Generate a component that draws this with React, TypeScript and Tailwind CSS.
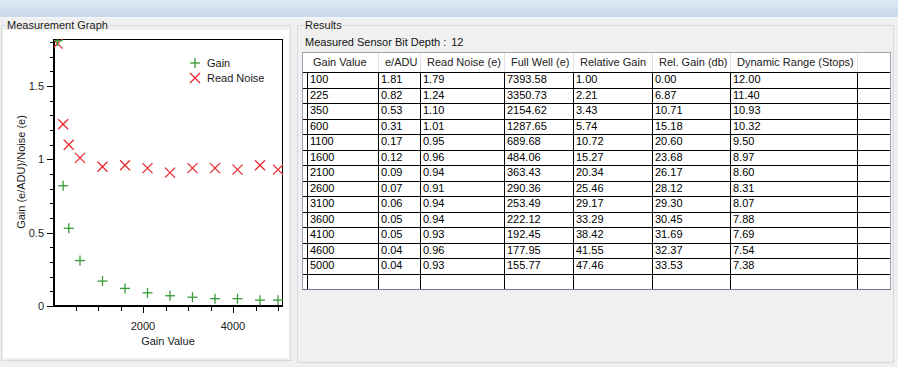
import React from "react";

const gains = [100, 225, 350, 600, 1100, 1600, 2100, 2600, 3100, 3600, 4100, 4600, 5000];
const eadu = [1.81, 0.82, 0.53, 0.31, 0.17, 0.12, 0.09, 0.07, 0.06, 0.05, 0.05, 0.04, 0.04];
const noise = [1.79, 1.24, 1.1, 1.01, 0.95, 0.96, 0.94, 0.91, 0.94, 0.94, 0.93, 0.96, 0.93];

const rows: string[][] = [
  ["100", "1.81", "1.79", "7393.58", "1.00", "0.00", "12.00"],
  ["225", "0.82", "1.24", "3350.73", "2.21", "6.87", "11.40"],
  ["350", "0.53", "1.10", "2154.62", "3.43", "10.71", "10.93"],
  ["600", "0.31", "1.01", "1287.65", "5.74", "15.18", "10.32"],
  ["1100", "0.17", "0.95", "689.68", "10.72", "20.60", "9.50"],
  ["1600", "0.12", "0.96", "484.06", "15.27", "23.68", "8.97"],
  ["2100", "0.09", "0.94", "363.43", "20.34", "26.17", "8.60"],
  ["2600", "0.07", "0.91", "290.36", "25.46", "28.12", "8.31"],
  ["3100", "0.06", "0.94", "253.49", "29.17", "29.30", "8.07"],
  ["3600", "0.05", "0.94", "222.12", "33.29", "30.45", "7.88"],
  ["4100", "0.05", "0.93", "192.45", "38.42", "31.69", "7.69"],
  ["4600", "0.04", "0.96", "177.95", "41.55", "32.37", "7.54"],
  ["5000", "0.04", "0.93", "155.77", "47.46", "33.53", "7.38"],
];

const headers = [
  "Gain Value",
  "e/ADU",
  "Read Noise (e)",
  "Full Well (e)",
  "Relative Gain",
  "Rel. Gain (db)",
  "Dynamic Range (Stops)",
  "",
];

const cols = "grid grid-cols-[4px_71px_42px_84px_69px_79px_78px_127px_33px]";

const px = (v: number) => 53 + v * 0.045;
const py = (v: number) => 306 - v * 146.6;

const GREEN = "#3a9a3a";
const RED = "#e8262e";

function Plus({ x, y }: { x: number; y: number }) {
  return (
    <g stroke={GREEN} strokeWidth={1.3}>
      <line x1={x - 5} y1={y} x2={x + 5} y2={y} />
      <line x1={x} y1={y - 5} x2={x} y2={y + 5} />
    </g>
  );
}

function Cross({ x, y }: { x: number; y: number }) {
  return (
    <g stroke={RED} strokeWidth={1.2}>
      <line x1={x - 5} y1={y - 5} x2={x + 5} y2={y + 5} />
      <line x1={x - 5} y1={y + 5} x2={x + 5} y2={y - 5} />
    </g>
  );
}

function Chart() {
  const yMinor: number[] = [];
  for (let i = 0; i <= 18; i++) yMinor.push(i / 10);
  const xTicks: number[] = [];
  for (let v = 500; v <= 5000; v += 500) xTicks.push(v);
  return (
    <svg width={286} height={328} viewBox="3 30 286 328" className="block bg-white">
      <defs>
        <clipPath id="plot">
          <rect x={54} y={39} width={229} height={267} />
        </clipPath>
      </defs>
      <g fontFamily="'Liberation Sans', Arial, sans-serif" fontSize={11} fill="#1a1a1a">
        <rect x={54.5} y={39.5} width={228} height={267} fill="none" stroke="#000" strokeWidth={1} />
        <rect x={53} y={39} width={2} height={268} fill="#000" />
        <rect x={53} y={305} width={230} height={2} fill="#000" />
        {yMinor.map((v, i) => {
          const major = i % 5 === 0;
          const y = Math.round(py(v)) + 0.5;
          return <line key={i} x1={major ? 47 : 50} x2={53} y1={y} y2={y} stroke="#000" strokeWidth={1} />;
        })}
        <text x={44} y={310} textAnchor="end">0</text>
        <text x={44} y={237} textAnchor="end">0.5</text>
        <text x={44} y={163} textAnchor="end">1</text>
        <text x={44} y={90} textAnchor="end">1.5</text>
        {xTicks.map((v) => {
          const major = v % 2000 === 0;
          const x = Math.round(px(v)) + 0.5;
          return <line key={v} x1={x} x2={x} y1={307} y2={major ? 313 : 311} stroke="#000" strokeWidth={1} />;
        })}
        <text x={143} y={330} textAnchor="middle">2000</text>
        <text x={233} y={330} textAnchor="middle">4000</text>
        <text x={168} y={345} textAnchor="middle">Gain Value</text>
        <text transform="translate(25,172) rotate(-90)" textAnchor="middle">Gain (e/ADU)/Noise (e)</text>
        <g clipPath="url(#plot)">
          {gains.map((g, i) => (
            <Cross key={"n" + i} x={px(g)} y={py(noise[i])} />
          ))}
          {gains.map((g, i) => (
            <Plus key={"g" + i} x={px(g)} y={py(eadu[i])} />
          ))}
        </g>
        <Plus x={195} y={63} />
        <text x={207} y={67}>Gain</text>
        <Cross x={195} y={78} />
        <text x={207} y={82}>Read Noise</text>
      </g>
    </svg>
  );
}

export default function App() {
  return (
    <div className="w-[898px] h-[367px] overflow-hidden bg-[#f0f0f0] flex flex-col font-['Liberation_Sans',Arial,sans-serif] text-[11px] text-[#111]">
      <div className="h-[17px] shrink-0 bg-gradient-to-b from-[#dfe9f5] to-[#c7d8eb]" />
      <div className="h-[1px] shrink-0 bg-[#f7f9fb]" />
      <div className="flex items-start">
        <fieldset className="ml-[1px] w-[290px] h-[343px] border border-[#d3dae2] pl-[1px] pr-[1px]">
          <legend className="ml-[3px] px-[1px] leading-[14px] text-[#1a1a1a]">Measurement Graph</legend>
          <div className="-mt-[2px]">
            <Chart />
          </div>
        </fieldset>
        <fieldset className="ml-[6px] w-[597px] h-[345px] border border-[#d3dae2]">
          <legend className="ml-[6px] px-[1px] leading-[14px] text-[#1a1a1a]">Results</legend>
          <div className="mt-[3px] ml-[4px] h-[14px] leading-[14px] pl-[3px] flex">
            <span>Measured Sensor Bit Depth :</span>
            <span className="ml-[5px]">12</span>
          </div>
          <div className="mt-[3px] ml-[4px] w-[589px] border border-[#9aa4ae] border-b-[#6d7b8c] bg-white text-black">
            <div className={cols + " h-[20px] border-b border-black"}>
              <div />
              {headers.map((h, i) => (
                <div
                  key={i}
                  className={
                    "pl-[6px] leading-[19px] whitespace-nowrap overflow-hidden text-[#222] " +
                    (i === 0 ? "" : "border-l border-[#e2e2e2]")
                  }
                >
                  {h}
                </div>
              ))}
            </div>
            {[...rows, ["", "", "", "", "", "", ""]].map((r, ri) => {
              const last = ri === rows.length;
              const h = last ? "h-[14px]" : ri % 2 === 0 ? "h-[16px] border-b border-black" : "h-[15px] border-b border-black";
              return (
                <div key={ri} className={cols + " " + h}>
                  <div className="bg-white" />
                  {[...r, ""].map((c, ci) => (
                    <div key={ci} className="border-l border-black pl-[2px] leading-[12px] whitespace-nowrap overflow-hidden">
                      {c}
                    </div>
                  ))}
                </div>
              );
            })}
          </div>
        </fieldset>
      </div>
    </div>
  );
}
